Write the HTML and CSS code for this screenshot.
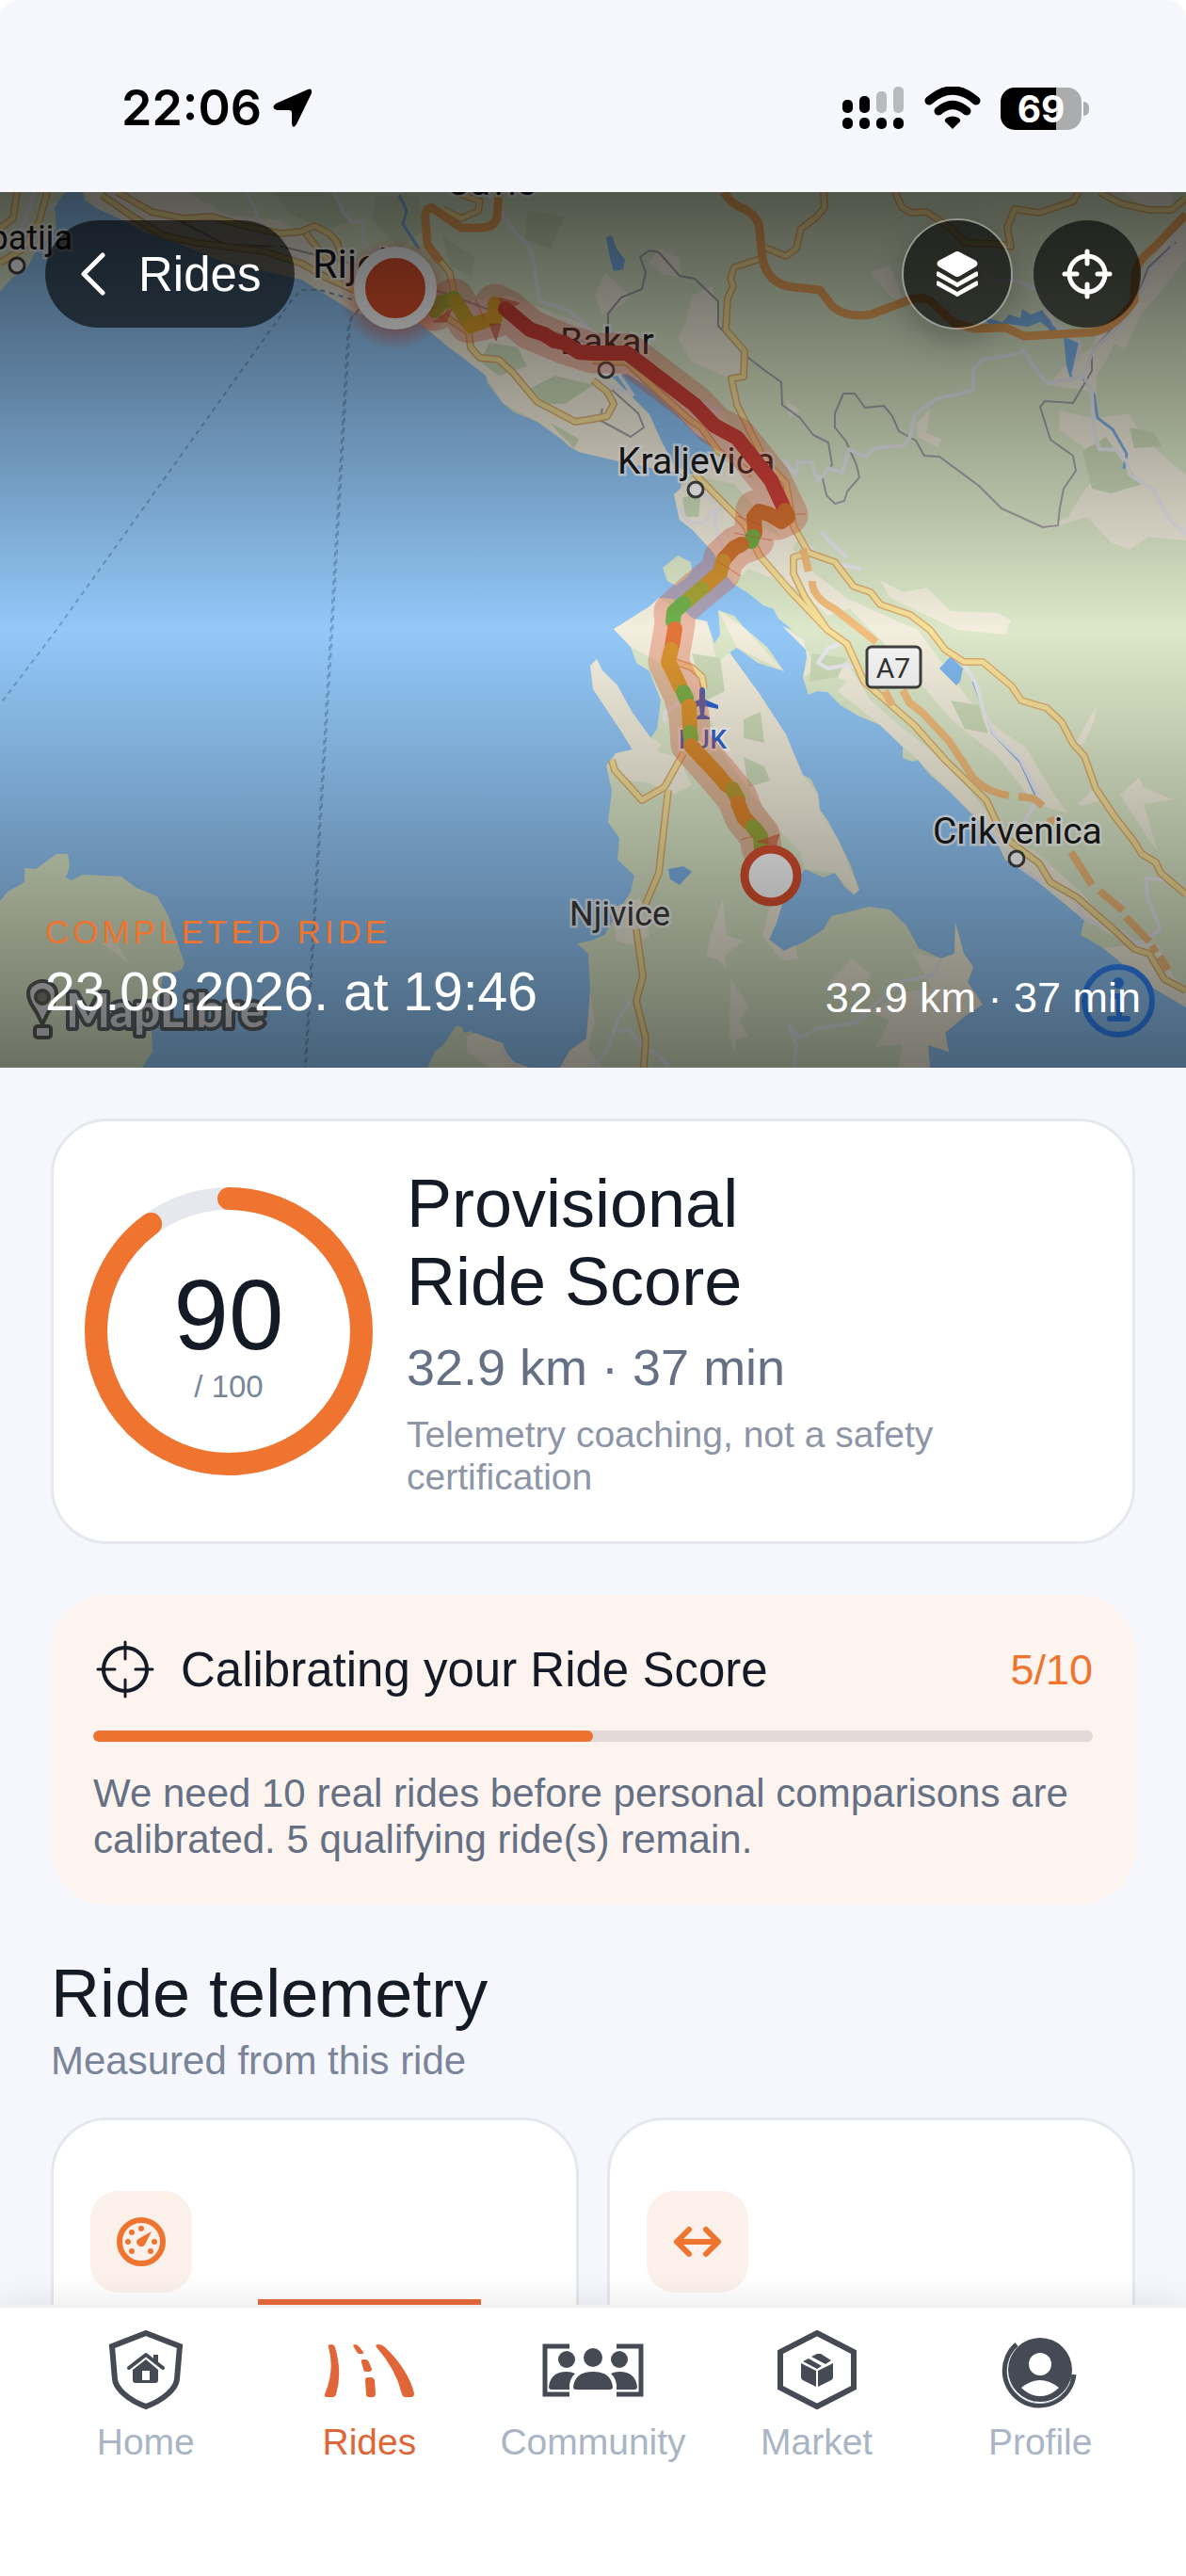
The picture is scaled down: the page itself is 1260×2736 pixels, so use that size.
FILE: index.html
```html
<!DOCTYPE html>
<html lang="en">

<head>
    <meta charset="UTF-8">
    <meta name="viewport" content="width=device-width, initial-scale=1.0">
    <title>Ride details</title>
    <link rel="stylesheet" href="styles.css">
</head>

<body>
    <div class="app">
        <!-- status bar -->
        <header class="status">
            <div class="status-left">
                <span class="clock">22:06</span>
                <svg width="42" height="42" viewBox="0 0 42 42">
                    <path d="M37 1Q42 -1 41 5L25 38Q21 44 20 37V26Q20 23 17 23H5Q-3 21 3 16Z" />
                </svg>
            </div>
            <div class="status-right">
                <svg width="66" height="46" viewBox="0 0 66 46">
                    <rect x="0" y="14" width="11" height="14" rx="5" />
                    <rect x="18" y="10" width="11" height="18" rx="5" />
                    <rect x="36" y="5" width="11" height="23" rx="5" fill="#b9babd" />
                    <rect x="54" y="0" width="11" height="28" rx="5" fill="#b9babd" />
                    <rect x="0" y="33" width="11" height="12" rx="5" />
                    <rect x="18" y="33" width="11" height="12" rx="5" />
                    <rect x="36" y="33" width="11" height="12" rx="5" />
                    <rect x="54" y="33" width="11" height="12" rx="5" />
                </svg>
                <svg width="60" height="46" viewBox="0 0 60 46">
                    <path d="M5 15Q30 -7 55 15" fill="none" stroke="#000" stroke-width="9" stroke-linecap="round" />
                    <path d="M15 26Q30 13 45 26" fill="none" stroke="#000" stroke-width="9" stroke-linecap="round" />
                    <path d="M30 45L22 37Q21 35 24 33Q30 30 36 33Q39 35 38 37Z" />
                </svg>
                <div class="battery"><span>69</span></div>
            </div>
        </header>

        <main class="screen">
            <!-- route map -->
            <section class="hero">
                <svg class="map" viewBox="0 0 1260 930" preserveAspectRatio="xMidYMid slice">
                    <defs>
                        <linearGradient id="shade" x1="0" y1="0" x2="0" y2="1">
                            <stop offset="0" stop-color="#000" stop-opacity=".63" />
                            <stop offset=".5" stop-color="#000" stop-opacity="0" />
                            <stop offset="1" stop-color="#000" stop-opacity=".51" />
                        </linearGradient>
                        <radialGradient id="glow">
                            <stop offset=".6" stop-color="#e0421c" stop-opacity=".45" />
                            <stop offset="1" stop-color="#e0421c" stop-opacity="0" />
                        </radialGradient>
                        <g id="roads" fill="none" stroke-linejoin="round">
                            <path d="M108 3L141 26 173 46 209 54 281 63 321 76 345 90 374 103 400 114" />
                            <path d="M125 0L161 21 195 28 225 26 260 36 297 44 320 42 334 36 350 44 358 53 365 75M325 44L350 75" />
                            <path d="M484 0L510 10 508 20 490 28 470 18M454 56L478 86 482 106 470 130 498 149 500 165 510 176 530 178 545 192 571 223 585 230 611 244 630 241 645 238 652 225 645 212 630 200" />
                            <path d="M875 0L876 16 868 26 851 39 846 60 835 68 813 59M807 71L780 80 776 92 779 100 773 113 771 146 791 169 790 196 777 198 783 226 803 266 812 285 835 309 843 355 859 383 887 393 900 410 907 419 925 425 935 438 967 449 988 465 1004 486 1024 499 1044 499 1075 525 1085 540 1112 548 1128 563 1140 586 1152 599 1164 633 1184 663 1205 690 1213 703 1228 712 1233 723 1260 746" />
                            <path d="M951 0L958 16 968 22 984 21 1010 38 1025 54 1060 55 1074 58 1070 38 1078 18 1104 22 1140 10 1146 0M1168 0L1190 12 1221 19 1245 19 1260 6" />
                            <path d="M630 179L666 181 694 207 734 243 745 250 763 275 800 300M738 299L791 353 807 386 839 423 879 465 900 480 918 520 971 566 1004 603 1048 646 1060 672 1068 686 1104 713 1116 733 1144 749 1184 784 1205 804 1221 809 1237 836 1260 848M859 383L843 388 843 405 855 430 879 465" />
                            <path d="M650 603L653 614 664 626 682 646 706 632 726 596M710 635L706 669 700 723 686 756M676 783L683 833 676 859 686 899 684 930M714 498L735 505 746 515 748 528" />
                            <path d="M18 0L14 28 0 38M50 0L42 30 25 60 0 75" />
                        </g>
                    </defs>
                    <rect width="1260" height="930" fill="#93c8f8" />

                    <!-- land -->
                    <g fill="#dce8c9">
                        <path d="M0 0H70L58 14 60 39 38 63 30 79 12 92 0 106Z" />
                        <path d="M88 0L90 9 104 18 112 18 133 31 150 42 193 56 237 74 281 83 300 88 321 93 334 102 362 106 378 129 400 128 442 136 460 150 478 166 486 164 498 161 492 176 514 186 516 195 518 203 534 224 546 234 571 244 591 256 604 270 615 276 630 279 670 289 710 289 726 301 722 318 716 321 722 348 736 359 758 383 768 404 779 416 795 426 811 439 822 443 827 453 842 465 831 461 855 476 857 493 853 516 859 534 868 530 879 531 893 545 911 556 935 566 959 589 959 601 969 605 975 603 988 619 1008 636 1020 640 1028 656 1056 683 1068 709 1092 724 1112 740 1132 756 1152 773 1148 789 1172 803 1200 826 1221 843 1240 852 1260 866V0Z" />
                        <path d="M704 399L720 386 734 393 735 402 730 409 718 418 709 413Z" />
                        <path d="M652 464L664 470 682 459 694 456 700 431 715 432 736 453 751 456 759 479 765 470 763 444 780 450 791 463 815 483 833 509 805 500 783 484 775 489 790 512 807 533 820 556 835 576 843 600 853 619 862 624 869 639 871 656 880 668 891 689 903 713 913 741 907 746 897 738 887 723 875 728 855 719 831 756 825 776 817 794 833 806 855 796 875 783 883 769 900 765 923 759 945 762 963 779 976 803 1000 814 1014 809 1015 776 1024 809 1034 823 1028 839 1044 863 1024 876 1004 893 1008 913 986 906 988 930H595L605 912 623 899 627 849 625 809 613 798 628 795 642 789 670 743 674 726 656 709 658 686 646 669 650 636 644 609 654 596 674 603 692 579 698 570 702 540 690 509 676 500 670 483Z" />
                        <path d="M0 753L8 743 26 733 26 718 38 719 60 703H72L74 716 70 728 76 731 88 725 129 727 145 739 167 748 179 769 189 799 196 819 193 826 173 833 169 856 161 889 162 913 151 930H0Z" />
                        <path d="M454 930L462 913 472 905 484 886 490 886 493 893 500 891 508 898 534 904 538 915 546 924 562 930Z" />
                    </g>

                    <!-- open ground -->
                    <g fill="#f3eedd">
                        <path d="M627 503L634 496 640 508 656 524 672 553 691 579 702 586 694 604 680 606 660 573 640 543 630 528Z" />
                        <path d="M88 0H200L240 24 300 30 340 60 380 84 420 110 470 120 540 110 620 140 700 190 770 240 830 320 850 365 842 380 812 345 780 310 730 300 670 289 615 276 571 244 534 224 516 195 492 176 478 166 442 136 378 129 321 93 237 74 193 56 133 31 104 18Z" />
                        <path d="M716 321L740 300 790 345 835 370 860 400 910 440 880 450 845 420 820 410 795 400 779 416 758 383 736 359 722 348Z" />
                        <path d="M831 461L855 476 857 493 900 500 925 540 960 570 1010 610 1050 660 1075 690 1100 700 1150 745 1190 790 1230 800 1245 830 1260 850V866L1221 843 1172 803 1200 800 1152 773 1092 724 1068 709 1056 683 1028 656 975 603 959 589 935 566 890 530 900 520 870 505 853 516 860 490Z" />
                        <path d="M690 440L700 431 736 453 751 456 762 500 775 489 807 533 835 576 853 619 869 639 871 656 891 689 913 741 907 746 887 723 855 719 850 700 830 680 800 640 770 600 755 560 735 530 700 500 670 483 652 464Z" />
                        <path d="M763 444L791 463 833 509 783 484Z" />
                        <path d="M646 612L654 596 680 590 720 600 735 630 715 640 690 628 670 625Z" />
                        <path d="M935 412L960 425 985 420 1010 445 1060 447 1074 455 1068 470 1018 465 985 450 945 430Z" />
                        <path d="M885 425L930 445 975 465 1030 540 1060 570 1090 590 1120 640 1135 660 1100 650 1060 600 1010 560 960 500Z" />
                        <path d="M1125 232L1160 240 1200 236 1215 262 1260 300V370L1220 366 1200 380 1180 372 1155 345 1105 360 1135 345 1150 320 1165 300 1150 270 1125 252Z" />
                        <path d="M1175 155L1215 90 1240 40 1260 26V70L1230 110 1212 130 1195 168Z" />
                        <path d="M1190 0H1245V14L1220 17Z" />
                        <path d="M1115 205L1130 185 1160 165 1170 140 1195 132 1180 170 1165 195 1164 215 1150 210Z" />
                        <path d="M924 85L945 78 956 105 958 118 945 110Z" />
                        <path d="M735 110L757 100 768 150 795 180 780 200 735 180 720 155 728 140Z" />
                        <path d="M643 86L670 110 660 120 640 130 632 110Z" />
                        <path d="M700 60L722 70 723 90 705 88 690 76Z" />
                        <path d="M974 245L988 230 984 256 1000 262 996 272 975 260Z" />
                        <path d="M835 220L850 232 838 240Z" />
                        <path d="M970 808L1000 814 1014 809 1015 776 1024 809 1034 823 1028 839 1044 863 1024 876 1004 893 1008 913 986 906 988 930H955L958 905 930 908 945 880 925 870 960 850 990 845Z" />
                        <path d="M880 840L905 815 925 830 915 850 895 846Z" />
                        <path d="M755 790L768 750 772 790 790 795 770 812 772 826 762 815 750 812Z" />
                        <path d="M810 790L822 740 831 756 825 776 817 794 833 806 845 800 848 815 830 816Z" />
                        <path d="M776 835L796 866 785 880 795 896 782 900 780 915 775 895Z" />
                        <path d="M650 760L680 750 690 790 670 800 655 795Z" />
                        <path d="M1140 590L1165 545 1163 560 1152 585Z" />
                        <path d="M1145 650L1168 628 1172 645 1150 652Z" />
                        <path d="M1190 640L1210 622 1215 632 1245 645 1215 650 1230 700 1222 690Z" />
                        <path d="M497 897L505 893 534 904 538 915 546 924 562 930H520L495 912Z" />
                        <path d="M595 930L605 912 623 899 627 850 632 880 625 910 640 930Z" />
                        <path d="M108 798L120 790 137 820 124 809Z" />
                    </g>
                    <!-- woods inside the open ground -->
                    <g fill="#cddcba">
                        <path d="M290 0H350L372 32 345 40 310 24Z" />
                        <path d="M400 4H445L450 40 425 60 395 30Z" />
                        <path d="M470 46L505 70 500 90 478 78Z" />
                        <path d="M560 20L600 26 585 60 558 50Z" />
                        <path d="M520 160L550 165 560 185 530 195 510 180Z" />
                        <path d="M560 210L590 195 630 205 600 225 570 225Z" />
                        <path d="M585 245L615 262 610 272 592 254Z" />
                        <path d="M735 490L765 495 770 530 750 540Z" />
                        <path d="M790 560L808 552 812 585 790 580Z" />
                        <path d="M790 600L812 610 818 625 795 632Z" />
                        <path d="M862 490L900 495 890 515 860 520Z" />
                        <path d="M1010 540L1040 545 1050 575 1025 570Z" />
                        <path d="M725 325L745 318 742 345 728 345Z" />
                        <path d="M1150 275L1175 260 1195 290 1215 310 1180 320 1160 315Z" />
                        <path d="M1200 250L1225 255 1235 270 1205 272Z" />
                    </g>
                    <!-- inland water -->
                    <g fill="#7fb7ec">
                        <path d="M650 196L666 193 685 205 702 219 720 236 738 256 767 276 750 282 735 300 716 290 702 263 690 236 670 216Z" fill="#8cc2f4" />
                        <path d="M644 48L650 46 655 60 664 72 662 82 652 84 648 70Z" />
                        <path d="M1045 133L1065 138 1072 130 1084 134 1086 124 1095 130 1106 126 1120 140 1124 152 1105 138 1092 143 1070 140 1050 140Z" />
                        <path d="M1130 154L1148 161 1142 185 1138 201 1133 185Z" />
                        <path d="M998 506L1010 493 1023 506 1020 520 1016 524Z" />
                        <path d="M710 719L726 716 735 722 722 736 712 730Z" />
                    </g>
                    <path d="M1106 126L1118 150M1150 196L1162 215 1166 240 1182 252 1197 278 1194 294M1034 520L1055 575 1084 605 1100 640M424 3L432 20 428 34 445 60" fill="none" stroke="#7fb0e4" stroke-width="3" />

                    <!-- railways -->
                    <g fill="none" stroke="#a2a2a8" stroke-width="2" stroke-linejoin="round">
                        <path d="M646 143L646 129 660 112 682 103 686 85 680 69 690 62 700 64 722 89 738 92 763 116 763 142 795 176 812 189 830 202 831 226 850 240 864 258 880 266 884 290 873 300 878 322 887 331 897 328 900 318 913 303 910 290 899 265 887 250 887 235 896 214 908 214 919 229 939 227 948 238 955 254 973 264 982 280 998 281 1040 312 1064 336 1108 356 1124 354 1126 335 1130 315 1143 296 1140 280 1116 263 1105 228 1110 222 1140 224 1160 190 1160 169 1205 119 1220 80 1249 53" />
                        <path d="M640 230L637 242 670 260 684 250 678 235 650 210" />
                        <path d="M170 20L240 56 300 58 390 80 480 110 560 140 640 165" />
                    </g>

                    <!-- minor roads -->
                    <g fill="none" stroke="#e9e9ee" stroke-width="4" stroke-linejoin="round">
                        <path d="M831 283L845 300 848 287 862 287 869 307 880 293 895 298 902 273 919 281 930 272 960 269 967 260 972 236 996 219 1012 216 1034 210 1034 188 1044 178 1080 172 1088 168 1096 182 1112 203 1152 196 1160 213 1162 255 1168 273 1186 274 1197 286 1200 300 1225 316 1244 350 1260 363" />
                        <path d="M1030 60L1050 94 1080 94 1105 105 1120 140 1148 160 1140 195M1152 195L1160 170 1200 130 1225 80 1245 60 1248 40" />
                        <path d="M738 315L770 335 755 340 748 352 730 350 722 335M760 340L762 365 770 380" />
                        <path d="M855 372L870 385 890 395 915 400M872 360L880 370 900 388" />
                        <path d="M900 478L880 484 869 500 880 506 900 502 920 510" />
                        <path d="M1024 502L1036 520 1045 550 1056 575 1084 602 1104 643 1090 665 1086 690" />
                        <path d="M1240 731L1217 729 1219 750 1233 783 1209 799 1190 784M1140 745L1150 770 1170 780" />
                        <path d="M1000 815L990 832 960 838 925 866 910 882 870 888 850 898 838 886 846 905 844 930M670 858L656 880 645 912 630 930M656 892L668 889 680 905 700 918 712 930" />
                        <path d="M706 563L706 553 722 542M1060 686L1068 700 1085 718 1110 735" />
                        <path d="M262 0L272 20 275 45 300 62 320 72M355 0L365 22 375 32 385 30 386 52 398 66 420 88M520 4L545 40 562 58 568 80 573 115 605 126 630 150 680 190 720 210 770 236" />
                        <path d="M36 0L30 20 20 50M60 12L48 20 40 40 15 60" />
                        <path d="M655 190L672 215 645 205M534 912L548 930" />
                    </g>

                    <!-- main roads, casing first -->
                    <use href="#roads" class="road-casing" />
                    <use href="#roads" class="road-fill" />

                    <!-- motorways and tunnels -->
                    <g fill="none" stroke="#eda75c" stroke-width="9" stroke-linejoin="round">
                        <path d="M769 0Q778 14 791 18 806 26 807 40L809 63Q812 98 843 101L871 104 885 122Q900 134 925 130L965 115Q985 108 995 122L1015 140 1036 145 1068 144 1088 153 1160 149Q1185 145 1205 115L1206 90Q1206 74 1225 60L1260 24" />
                        <path d="M530 0L528 26Q526 38 510 38L490 38 458 16Q450 20 452 30L454 56 468 74" />
                        <path d="M853 379L859 403M863 413Q862 430 887 443L915 465 931 478M940 530L948 545M959 529L966 542 980 553 1008 583 1028 613Q1040 636 1072 641M1082 642L1098 644 1108 652M1116 664L1118 672M1138 701L1150 720 1160 736M1168 742L1193 763M1196 770L1221 796M1224 800L1228 808M1232 812L1241 826" stroke="#f3bd7c" stroke-width="8" />
                    </g>

                    <!-- ferry lines -->
                    <g fill="none" stroke="#6f9cc6" stroke-width="2" stroke-dasharray="5 5">
                        <path d="M382 124L372 135 354 450 325 930" />
                        <path d="M380 126L370 140 352 455 324 925" />
                        <path d="M374 114L340 104H320L309 116 60 465 0 544" />
                    </g>

                    <!-- town labels -->
                    <g class="places">
                        <text x="77" y="61" text-anchor="end" class="coast">Opatija</text>
                        <text x="474" y="3">Čavle</text>
                        <text x="332" y="91" class="city">Rijeka</text>
                        <text x="595" y="172">Bakar</text>
                        <text x="656" y="299">Kraljevica</text>
                        <text x="991" y="692">Crikvenica</text>
                        <text x="605" y="779" class="village">Njivice</text>
                        <text x="721" y="591" class="airport">RJK</text>
                    </g>
                    <g fill="#fff" stroke="#444" stroke-width="3">
                        <circle cx="18" cy="78" r="8" />
                        <circle cx="644" cy="189" r="8" />
                        <circle cx="739" cy="316" r="8" />
                        <circle cx="1080" cy="708" r="8" />
                    </g>
                    <path d="M746 526q3 0 3 5v8l14 6v4l-14-3-1 9 6 3v2h-15v-2l5-3-1-9-14 3v-4l14-6v-8q0-5 3-5Z" fill="#2f62cc" />
                    <rect x="921" y="483" width="57" height="43" rx="5" fill="#f6f6f6" stroke="#3f3f3f" stroke-width="3" />
                    <text x="949" y="516" class="shield">A7</text>

                    <!-- ridden route -->
                    <g fill="none" stroke-linejoin="round" stroke-linecap="round">
                        <path d="M462 126L482 113 498 139 526 133 526 119 540 126 563 146 599 161 630 171H666L738 226 759 248 783 261 819 306 837 343 826 348 803 338 801 369 783 376 769 389 765 404 738 426 716 446 717 459 710 499 726 533 732 556 734 586 763 619 783 643 791 663 807 683 809 696" stroke="#e0593a" stroke-opacity=".34" stroke-width="43" />
                        <g stroke-width="16">
                            <path d="M462 126L468 118 482 113" stroke="#9bb03a" />
                            <path d="M484 116L498 139" stroke="#c9a52e" />
                            <path d="M500 142L526 133 526 119" stroke="#dda02c" />
                            <path d="M537 124L563 146 578 151 589 158 599 160 615 170 630 171H666L738 226 759 248 783 261 819 306 832 334" stroke="#cf4038" />
                            <path d="M834 338L837 345 830 350 817 342 806 339 801 345 802 362" stroke="#d4702f" />
                            <path d="M800 366L798 371" stroke="#76ad45" />
                            <path d="M788 374L780 378 769 390" stroke="#d2742f" />
                            <path d="M768 392L765 404 748 419" stroke="#d2922f" />
                            <path d="M745 421L730 434" stroke="#a7a437" />
                            <path d="M726 437L716 446 715 456" stroke="#70b04c" />
                            <path d="M717 464L714 482" stroke="#e2743a" />
                            <path d="M713 486L710 499 723 526" stroke="#d9942f" />
                            <path d="M726 531L729 538" stroke="#79ac45" />
                            <path d="M732 546L733 568" stroke="#d9932f" />
                            <path d="M733 574L734 580" stroke="#8bac42" />
                            <path d="M734 588L763 619 772 630" stroke="#db8a2e" />
                            <path d="M778 634L784 645" stroke="#b79a35" />
                            <path d="M784 649L790 664 796 670" stroke="#de852d" />
                            <path d="M800 674L808 684 809 698" stroke="#9aa83c" />
                        </g>
                    </g>
                    <path d="M505 114L514 134M530 112L552 118 536 126ZM520 140L527 158 532 140ZM460 138L480 124 474 138ZM784 344L808 354M845 342H856M780 362L820 370M762 392L787 408M805 690L828 682 824 694ZM787 688L800 684" fill="#cf5238" stroke="#cf5238" stroke-opacity=".6" fill-opacity=".6" />
                    <circle cx="420" cy="108" r="60" fill="url(#glow)" />
                    <circle cx="420" cy="102" r="38" fill="#e0522d" stroke="#fff" stroke-width="12" />
                    <circle cx="819" cy="726" r="28" fill="#fff" stroke="#dd5130" stroke-width="9" />

                    <!-- attribution -->
                    <g fill="#dcdce0" stroke="#5c5f56" stroke-width="4">
                        <path d="M45 884Q40 872 33 862Q27 850 33 843Q45 833 57 843Q63 850 57 862Q50 872 45 884Z" />
                        <rect x="37" y="886" width="17" height="12" rx="3" />
                        <circle cx="45" cy="855" r="7" fill="#7d8377" />
                    </g>
                    <text x="70" y="887" class="logo">MapLibre</text>
                    <g stroke="#3388ff" stroke-width="6" stroke-linecap="round" fill="none">
                        <circle cx="1188" cy="859" r="36" />
                        <path d="M1182 854H1189V877M1179 878H1198" />
                        <circle cx="1188" cy="840" r="3" />
                    </g>
                    <rect width="1260" height="930" fill="url(#shade)" />
                </svg>

                <div class="hero-top">
                    <button type="button" class="back">
                        <svg width="26" height="46" viewBox="0 0 26 46">
                            <path d="M23 3L3 23L23 43" fill="none" stroke="#fff" stroke-width="5" stroke-linecap="round" stroke-linejoin="round" />
                        </svg>
                        Rides
                    </button>
                    <div class="tools">
                        <button type="button" class="tool layers" aria-label="Map layers">
                            <svg width="46" height="50" viewBox="0 0 46 50" fill="#fff">
                                <path d="M20 2Q23 0 26 2L43 11Q46 14 43 17L26 27Q23 29 20 27L3 17Q0 14 3 11Z" />
                                <path d="M1 24Q1 21 4 23L23 34L42 23Q45 21 45 24V27L25 38Q23 40 21 38L1 27Z" />
                                <path d="M1 34Q1 31 4 33L23 44L42 33Q45 31 45 34V37L25 48Q23 50 21 48L1 37Z" />
                            </svg>
                        </button>
                        <button type="button" class="tool" aria-label="Center route">
                            <svg width="56" height="56" viewBox="0 0 56 56" fill="none" stroke="#fff" stroke-width="5" stroke-linecap="round">
                                <circle cx="28" cy="28" r="19" />
                                <path d="M28 4V17M28 39V52M4 28H17M39 28H52" />
                            </svg>
                        </button>
                    </div>
                </div>
                <div class="hero-bottom">
                    <div>
                        <p class="eyebrow">COMPLETED RIDE</p>
                        <h1>23.08.2026. at 19:46</h1>
                    </div>
                    <p class="meta">32.9 km · 37 min</p>
                </div>
            </section>

            <div class="content">
                <!-- score -->
                <section class="card score">
                    <div class="ring">
                        <svg viewBox="0 0 306 306" fill="none" stroke-width="24">
                            <circle cx="153" cy="153" r="141" stroke="#e6e8ee" />
                            <circle cx="153" cy="153" r="141" stroke="#ee742f" stroke-linecap="round" pathLength="100" stroke-dasharray="90 100" transform="rotate(-90 153 153)" />
                        </svg>
                        <div class="ring-text">
                            <strong>90</strong>
                            <span>/ 100</span>
                        </div>
                    </div>
                    <div class="score-text">
                        <h2>Provisional<br>Ride Score</h2>
                        <p class="distance">32.9 km · 37 min</p>
                        <p class="note">Telemetry coaching, not a safety certification</p>
                    </div>
                </section>

                <!-- calibration -->
                <section class="calibration">
                    <div class="calibration-head">
                        <svg width="69" height="69" viewBox="0 0 69 69" fill="none" stroke="#141a26" stroke-width="4" stroke-linecap="round">
                            <circle cx="34" cy="34" r="23" />
                            <path d="M34 5V23M34 45V63M5 34H23M45 34H63" stroke-width="3" />
                        </svg>
                        <h3><label for="progress">Calibrating your Ride Score</label></h3>
                        <span class="count">5/10</span>
                    </div>
                    <progress id="progress" value="5" max="10"></progress>
                    <p>We need 10 real rides before personal comparisons are calibrated. 5 qualifying ride(s) remain.</p>
                </section>

                <!-- telemetry -->
                <section class="telemetry">
                    <h2>Ride telemetry</h2>
                    <p>Measured from this ride</p>
                    <div class="cards">
                        <div class="card stat">
                            <div class="tile">
                                <svg width="54" height="54" viewBox="0 0 54 54">
                                    <circle cx="27" cy="27" r="23" fill="none" stroke="#ee742f" stroke-width="6" />
                                    <g fill="#ee742f">
                                        <path d="M38 16L31 30Q28 34 24 31Q20 27 24 24Z" />
                                        <circle cx="27" cy="13" r="3" />
                                        <circle cx="17" cy="17" r="3" />
                                        <circle cx="13" cy="27" r="3" />
                                        <circle cx="17" cy="37" r="3" />
                                        <circle cx="37" cy="37" r="3" />
                                        <circle cx="41" cy="27" r="3" />
                                    </g>
                                </svg>
                            </div>
                        </div>
                        <div class="card stat">
                            <div class="tile">
                                <svg width="54" height="54" viewBox="0 0 54 54" fill="none" stroke="#ee742f" stroke-width="6" stroke-linecap="round" stroke-linejoin="round">
                                    <path d="M5 27H49M18 14L5 27L18 40M36 14L49 27L36 40" />
                                </svg>
                            </div>
                        </div>
                    </div>
                </section>
            </div>
        </main>

        <!-- tab bar -->
        <nav class="tabs">
            <a href="#">
                <svg width="108" height="84" viewBox="0 0 108 84">
                    <path d="M54 3L90 17L87 52C86 62 73 74 54 81C35 74 22 62 21 52L18 17Z" fill="none" stroke="#454a54" stroke-width="6" />
                    <path d="M36 40L54 26L72 40" fill="none" stroke="#454a54" stroke-width="4" stroke-linecap="round" stroke-linejoin="round" />
                    <path d="M62 26H67V36L62 32ZM54 31L67 42V53Q67 56 64 56H43Q40 56 40 53V42ZM50 43V53H58V43Z" fill="#454a54" fill-rule="evenodd" />
                </svg>
                Home
            </a>
            <a href="#" class="active">
                <svg width="108" height="84" viewBox="0 0 108 84" fill="#e06639">
                    <path d="M11 18Q10 15 14 15Q17 15 18 18Q26 45 19 68Q18 71 16 71H9Q6 71 7 68Q18 42 11 18Z" />
                    <path d="M38 18Q36 15 39 15Q42 15 44 18L48 23Q49 25 46 25H44Q42 25 41 23Z" />
                    <path d="M46 34Q45 31 48 31H50Q53 31 54 34L57 41Q57 44 54 44H51Q48 44 48 41Z" />
                    <path d="M50 53Q50 50 53 50H56Q59 50 60 53L61 67Q61 71 58 71H54Q51 71 51 68Z" />
                    <path d="M62 18Q60 15 64 15Q68 15 71 18Q96 42 102 67Q102 71 99 71H93Q90 71 89 68Q83 42 62 18Z" />
                </svg>
                Rides
            </a>
            <a href="#">
                <svg width="108" height="84" viewBox="0 0 108 84" fill="#454a54">
                    <path d="M29 17H3V68H29M79 17H105V68H79" fill="none" stroke="#454a54" stroke-width="5" />
                    <circle cx="26" cy="31" r="9" />
                    <circle cx="82" cy="31" r="9" />
                    <circle cx="54" cy="29" r="10" />
                    <path d="M7 60Q9 44 26 44Q31 44 35 46Q28 52 29 63H10Q7 63 7 60ZM101 60Q99 44 82 44Q77 44 73 46Q80 52 79 63H98Q101 63 101 60Z" />
                    <path d="M33 60Q35 44 54 44Q73 44 75 60Q75 63 72 63H36Q33 63 33 60Z" />
                </svg>
                Community
            </a>
            <a href="#">
                <svg width="108" height="84" viewBox="0 0 108 84" fill="#454a54">
                    <path d="M54 3L93 23V61L54 81L15 61V23Z" fill="none" stroke="#454a54" stroke-width="6" />
                    <path d="M37 35L53 43V60L39 53Q37 52 37 50ZM71 35L55 43V60L69 53Q71 52 71 50ZM39 33L45 30L59 38L54 41ZM48 28L54 25L58 25L69 32L63 36Z" />
                </svg>
                Market
            </a>
            <a href="#">
                <svg width="108" height="84" viewBox="0 0 108 84" fill="#454a54">
                    <path d="M29 15A37 37 0 1 0 90 47" fill="none" stroke="#454a54" stroke-width="5" />
                    <circle cx="54" cy="42" r="34" />
                    <path d="M22 56A34 34 0 0 0 86 54" fill="none" stroke="#c9cbce" stroke-width="1" />
                    <circle cx="54" cy="36" r="12" fill="#fff" />
                    <path d="M34 61Q44 53 54 53Q64 53 74 61Q65 70 54 70Q43 70 34 61Z" fill="#fff" />
                </svg>
                Profile
            </a>
        </nav>
    </div>
</body>

</html>
```
FILE: styles.css
```css
* {
    margin: 0;
    padding: 0;
    box-sizing: border-box;
}

body {
    background: #fff;
    font-family: "Liberation Sans", Arial, sans-serif;
    color: #141a26;
}

h1,
h2,
h3 {
    font-weight: 400;
}

button {
    border: 0;
    font: inherit;
    color: #fff;
}

.app {
    height: 100vh;
    display: flex;
    flex-direction: column;
    overflow: hidden;
    background: #f6f7fc;
    border-radius: 20px 20px 0 0;
}

/* status bar */
.status {
    height: 204px;
    flex: none;
    display: flex;
    justify-content: space-between;
    align-items: center;
    padding: 26px 102px 0 129px;
}

.status-left,
.status-right {
    display: flex;
    align-items: center;
}

.status-left {
    gap: 12px;
}

.status-right {
    gap: 21px;
}

.clock {
    font: 600 52px/60px Inter, sans-serif;
    color: #000;
}

.battery {
    position: relative;
    width: 86px;
    height: 45px;
    margin-right: 9px;
    border-radius: 15px;
    background: linear-gradient(90deg, #000 69%, #abacae 69%);
    color: #fff;
    font: 700 39px/45px Inter, sans-serif;
    text-align: center;
}

/* battery tip */
.battery::after {
    content: '';
    position: absolute;
    right: -8px;
    top: 15px;
    width: 6px;
    height: 15px;
    border-radius: 0 6px 6px 0;
    background: #abacae;
}

.screen {
    flex: 1;
    min-height: 0;
    overflow-y: auto;
    scrollbar-width: none;
}

/* map header */
.hero {
    position: relative;
    height: 930px;
    display: flex;
    flex-direction: column;
    justify-content: space-between;
    padding: 30px 48px 48px;
    color: #fff;
}

.map {
    position: absolute;
    left: 0;
    top: 0;
    width: 100%;
    height: 100%;
}

.road-casing {
    stroke: #dcae70;
    stroke-width: 8px;
}

.road-fill {
    stroke: #f7e29b;
    stroke-width: 5px;
}

.places text {
    font: 400 39px Roboto, sans-serif;
    fill: #1b1b1b;
    stroke: #fff;
    stroke-opacity: .75;
    stroke-width: 5px;
    paint-order: stroke;
}

.places .city {
    font-size: 43px;
}

.places .coast {
    font-size: 36px;
}

.places .village {
    font-size: 36px;
    fill: #3c3c3c;
}

.places .airport {
    font-size: 28px;
    font-weight: 500;
    fill: #2f62cc;
}

.shield {
    font: 400 30px Roboto, sans-serif;
    fill: #333;
    text-anchor: middle;
}

.logo {
    font: 700 50px Lato, sans-serif;
    fill: #dcdce0;
    stroke: #5c6468;
    stroke-width: 8px;
    stroke-linejoin: round;
    paint-order: stroke;
}

.hero-top,
.hero-bottom {
    position: relative;
    display: flex;
    justify-content: space-between;
}

.hero-bottom {
    align-items: flex-end;
}

.back {
    height: 114px;
    display: flex;
    align-items: center;
    gap: 35px;
    padding: 0 36px 0 38px;
    border-radius: 57px;
    background: rgba(0, 0, 0, .6);
    font-size: 51px;
}

.tools {
    display: flex;
    gap: 24px;
}

.tool {
    width: 114px;
    height: 114px;
    display: flex;
    justify-content: center;
    align-items: center;
    border-radius: 50%;
    background: rgba(0, 0, 0, .62);
}

.layers {
    box-shadow: 0 0 0 2px rgba(255, 255, 255, .35), 0 12px 36px rgba(0, 0, 0, .25);
}

.eyebrow {
    margin-bottom: 9px;
    font-size: 35px;
    line-height: 42px;
    letter-spacing: 4px;
    color: #ee742f;
}

.hero h1 {
    font-size: 57px;
    line-height: 66px;
}

.meta {
    font-size: 45px;
    line-height: 52px;
}

.content {
    padding: 54px 54px 0;
}

.card {
    border: 3px solid #e6e8ef;
    border-radius: 60px;
    background: #fff;
}

/* score card */
.score {
    display: flex;
    align-items: center;
    gap: 36px;
    padding: 46px 33px;
}

.ring {
    position: relative;
    flex: none;
    width: 306px;
    height: 306px;
}

.ring-text {
    position: absolute;
    inset: 0;
    display: flex;
    flex-direction: column;
    justify-content: center;
    align-items: center;
}

.ring-text strong {
    font-size: 105px;
    line-height: 117px;
    font-weight: 400;
}

.ring-text span {
    font-size: 33px;
    line-height: 36px;
    color: #7b8599;
}

.score-text h2,
.telemetry h2 {
    font-size: 72px;
    line-height: 83px;
}

.distance {
    margin: 18px 0;
    font-size: 54px;
    line-height: 62px;
    color: #657085;
}

.note {
    font-size: 39px;
    line-height: 45px;
    color: #8d95a6;
}

/* calibration */
.calibration {
    margin-top: 54px;
    padding: 45px;
    border-radius: 60px;
    background: #fdf4ef;
}

.calibration-head {
    display: flex;
    align-items: center;
    gap: 24px;
}

.calibration h3 {
    flex: 1;
    font-size: 51px;
    line-height: 60px;
}

.count {
    font-size: 45px;
    line-height: 52px;
    color: #ee742f;
}

.calibration progress {
    display: block;
    width: 100%;
    height: 12px;
    margin: 30px 0;
    border: 0;
    border-radius: 6px;
    overflow: hidden;
    background: #e2d9d8;
    appearance: none;
    -webkit-appearance: none;
}

.calibration progress::-webkit-progress-bar {
    background: #e2d9d8;
}

.calibration progress::-webkit-progress-value {
    border-radius: 6px;
    background: #ec722f;
}

.calibration p {
    font-size: 42px;
    line-height: 49px;
    color: #667085;
}

/* telemetry */
.telemetry {
    margin-top: 53px;
}

.telemetry p {
    margin-top: 6px;
    font-size: 42px;
    line-height: 48px;
    color: #7b8599;
}

.cards {
    display: grid;
    grid-template-columns: 1fr 1fr;
    gap: 30px;
    margin-top: 36px;
}

.stat {
    min-height: 420px;
    padding: 75px 39px;
}

.tile {
    width: 108px;
    height: 108px;
    display: flex;
    justify-content: center;
    align-items: center;
    border-radius: 30px;
    background: #fcf0ea;
}

/* tab bar */
.tabs {
    position: relative;
    flex: none;
    height: 288px;
    display: flex;
    padding: 0 36px;
    border-top: 3px solid #efefef;
    background: #fff;
    box-shadow: 0 0 36px rgba(0, 0, 0, .1);
}

.tabs a {
    position: relative;
    flex: 1;
    display: flex;
    flex-direction: column;
    align-items: center;
    gap: 12px;
    padding-top: 24px;
    font-size: 39px;
    line-height: 45px;
    color: #a9b5c4;
    text-decoration: none;
}

.tabs .active {
    color: #e06639;
}

/* line above the current tab */
.tabs .active::before {
    content: '';
    position: absolute;
    left: 0;
    right: 0;
    top: -9px;
    height: 6px;
    background: #e06639;
}
```
